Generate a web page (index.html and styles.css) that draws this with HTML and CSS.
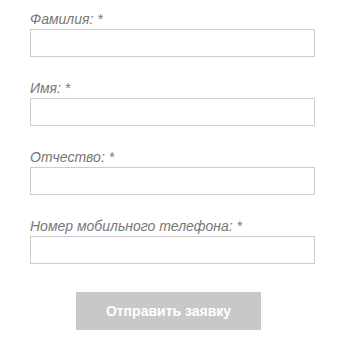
FILE: index.html
```html
<!DOCTYPE html>
<html lang="ru">
<head>
    <meta charset="UTF-8">
    <meta name="viewport" content="width=device-width, initial-scale=1.0">
    <title>Заявка</title>
    <link rel="stylesheet" href="styles.css">
</head>
<body>
    <form class="order-form">
        <div class="field">
            <label for="lastName">Фамилия: *</label>
            <input type="text" id="lastName">
        </div>
        <div class="field">
            <label for="firstName">Имя: *</label>
            <input type="text" id="firstName">
        </div>
        <div class="field">
            <label for="middleName">Отчество: *</label>
            <input type="text" id="middleName">
        </div>
        <div class="field">
            <label for="phone">Номер мобильного телефона: *</label>
            <input type="text" id="phone">
        </div>
        <button type="submit" class="submit">Отправить заявку</button>
    </form>
</body>
</html>
```

FILE: styles.css
```css
body {
    margin: 0;
    background-color: #fff;
    font-family: 'Liberation Sans', Arial, sans-serif;
}
.order-form {
    width: 285px;
    padding: 9px 0 0 30px;
}
.field {
    margin-bottom: 21px;
}
.field label {
    display: block;
    font-size: 14px;
    line-height: 20px;
    font-style: italic;
    color: #777;
}
.field input {
    display: block;
    box-sizing: border-box;
    width: 285px;
    height: 28px;
    margin: 0;
    border: 1px solid #ccc;
    background: #fff;
    padding: 0 8px;
}
.submit {
    display: block;
    width: 185px;
    height: 38px;
    margin: 28px 0 0 46px;
    background-color: #c8c8c8;
    color: #fff;
    border: none;
    font-family: 'Liberation Sans', Arial, sans-serif;
    font-size: 14px;
    font-weight: bold;
    cursor: pointer;
}
```
